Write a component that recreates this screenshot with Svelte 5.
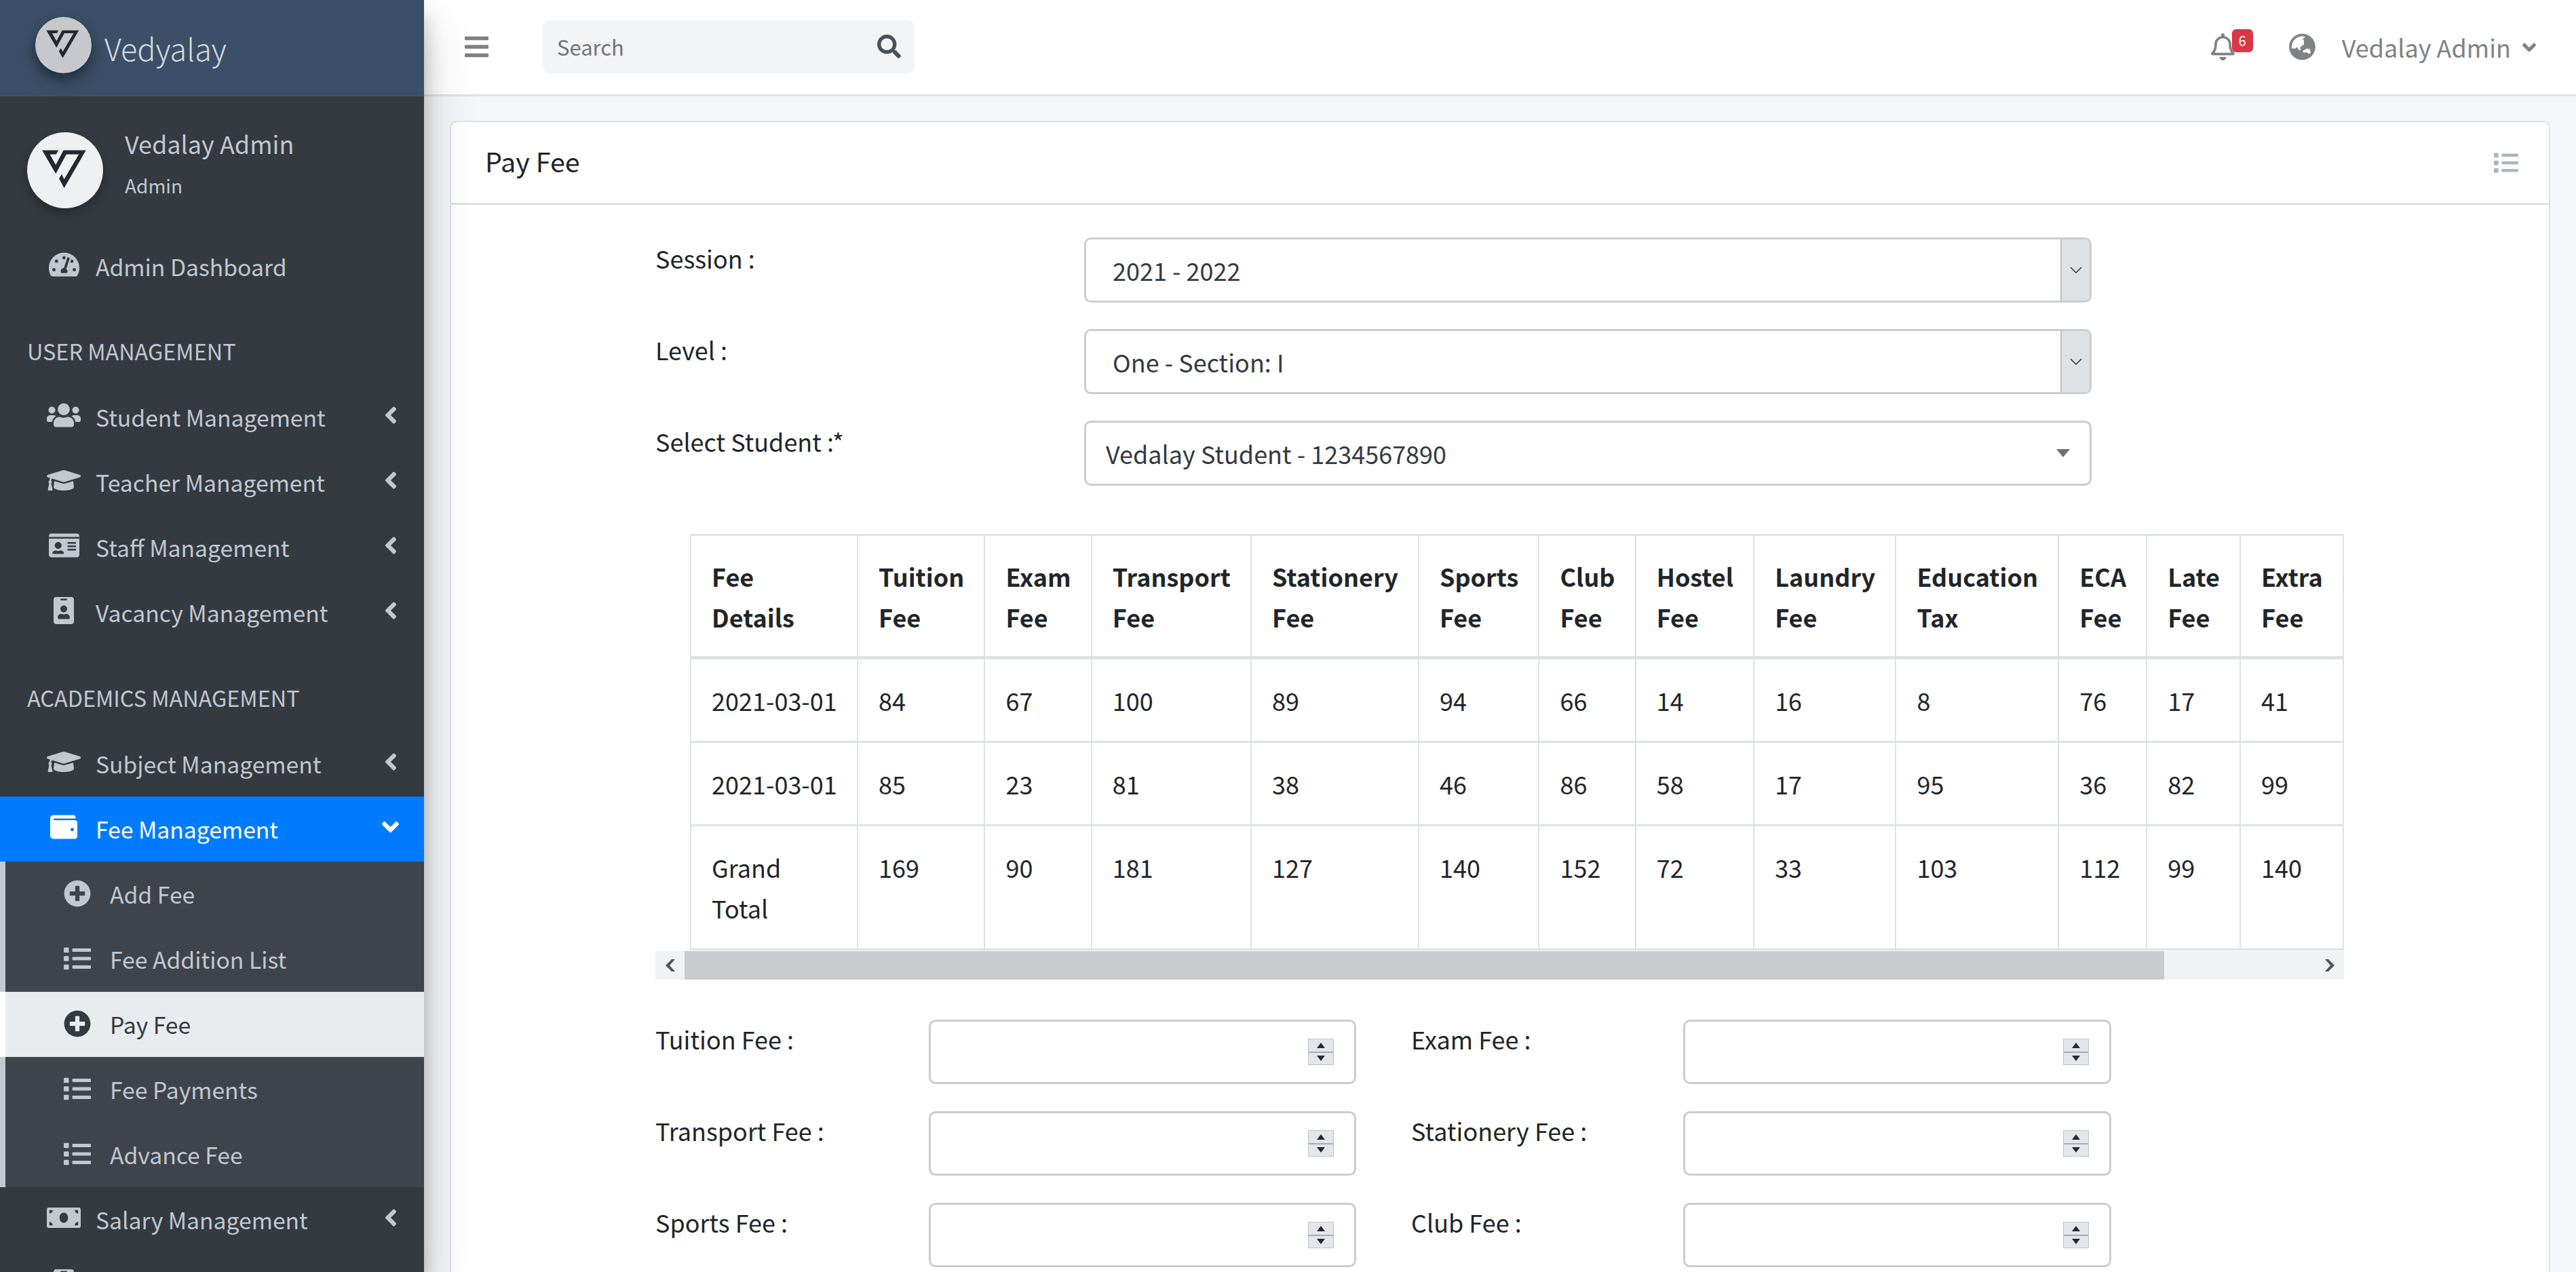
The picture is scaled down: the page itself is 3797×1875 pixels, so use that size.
<script lang="ts">
  const ICONS: Record<string, { w: number; d: string }> = {
    gauge: { w: 576, d: "M288 32C128.94 32 0 160.94 0 320c0 52.8 14.25 102.26 39.06 144.8 5.61 9.62 16.3 15.2 27.44 15.2h443c11.14 0 21.83-5.58 27.44-15.2C561.75 422.26 576 372.8 576 320c0-159.06-128.94-288-288-288zm0 64c14.71 0 26.58 10.13 30.32 23.65-1.11 2.26-2.64 4.23-3.45 6.67l-9.22 27.67c-5.13 3.49-10.97 6.01-17.64 6.01-17.67 0-32-14.33-32-32S270.33 96 288 96zM96 384c-17.67 0-32-14.33-32-32s14.33-32 32-32 32 14.33 32 32-14.33 32-32 32zm48-160c-17.67 0-32-14.33-32-32s14.33-32 32-32 32 14.33 32 32-14.33 32-32 32zm246.77-72.41l-61.33 184C343.13 347.33 352 364.54 352 384c0 11.72-3.38 22.55-8.88 32H232.88c-5.5-9.45-8.88-20.28-8.88-32 0-33.94 26.5-61.43 59.9-63.59l61.34-184.01c4.17-12.56 17.73-19.45 30.36-15.17 12.57 4.19 19.35 17.79 15.17 30.36zm14.66 57.2l15.52-46.55c3.47-1.29 7.13-2.23 11.05-2.23 17.67 0 32 14.33 32 32s-14.33 32-32 32c-11.38-.01-20.89-6.28-26.57-15.22zM480 384c-17.67 0-32-14.33-32-32s14.33-32 32-32 32 14.33 32 32-14.33 32-32 32z" },
    users: { w: 640, d: "M96 224c35.3 0 64-28.7 64-64s-28.7-64-64-64-64 28.7-64 64 28.7 64 64 64zm448 0c35.3 0 64-28.7 64-64s-28.7-64-64-64-64 28.7-64 64 28.7 64 64 64zm32 32h-64c-17.6 0-33.5 7.1-45.1 18.6 40.3 22.1 68.9 62 75.1 109.4h66c17.7 0 32-14.3 32-32v-32c0-35.3-28.7-64-64-64zm-256 0c61.9 0 112-50.1 112-112S381.9 32 320 32 208 82.1 208 144s50.1 112 112 112zm76.8 32h-8.3c-20.8 10-43.9 16-68.5 16s-47.6-6-68.5-16h-8.3C179.6 288 128 339.6 128 403.2V432c0 26.5 21.5 48 48 48h288c26.5 0 48-21.5 48-48v-28.8c0-63.6-51.6-115.2-115.2-115.2zm-223.7-13.4C161.5 263.1 145.6 256 128 256H64c-35.3 0-64 28.7-64 64v32c0 17.7 14.3 32 32 32h65.9c6.3-47.4 34.9-87.3 75.2-109.4z" },
    cap: { w: 640, d: "M622.34 153.2L343.4 67.5c-15.2-4.67-31.6-4.67-46.79 0L17.66 153.2c-23.54 7.23-23.54 38.36 0 45.59l48.63 14.94c-10.67 13.19-17.23 29.28-17.88 46.9C38.78 266.15 32 276.11 32 288c0 10.78 5.68 19.85 13.86 25.65L20.33 428.53C18.11 438.52 25.71 448 35.94 448h56.11c10.24 0 17.84-9.48 15.62-19.47L82.14 313.65C90.32 307.85 96 298.78 96 288c0-11.57-6.47-21.25-15.66-26.87.76-15.02 8.44-28.3 20.69-36.72L296.6 284.5c9.06 2.78 26.44 6.25 46.79 0l278.95-85.7c23.55-7.24 23.55-38.36 0-45.6zM352.79 315.09c-28.53 8.76-52.84 3.92-65.59 0l-145.02-44.55L128 384c0 35.35 85.96 64 192 64s192-28.65 192-64l-14.18-113.47-145.03 44.56z" },
    card: { w: 576, d: "M528 32H48C21.5 32 0 53.5 0 80v16h576V80c0-26.5-21.5-48-48-48zM0 432c0 26.5 21.5 48 48 48h480c26.5 0 48-21.5 48-48V128H0v304zm352-232c0-4.4 3.6-8 8-8h144c4.4 0 8 3.6 8 8v16c0 4.4-3.6 8-8 8H360c-4.4 0-8-3.6-8-8v-16zm0 64c0-4.4 3.6-8 8-8h144c4.4 0 8 3.6 8 8v16c0 4.4-3.6 8-8 8H360c-4.4 0-8-3.6-8-8v-16zm0 64c0-4.4 3.6-8 8-8h144c4.4 0 8 3.6 8 8v16c0 4.4-3.6 8-8 8H360c-4.4 0-8-3.6-8-8v-16zM176 192c35.3 0 64 28.7 64 64s-28.7 64-64 64-64-28.7-64-64 28.7-64 64-64zM67.1 396.2C75.5 370.5 99.6 352 128 352h8.2c12.3 5.1 25.7 8 39.8 8s27.6-2.9 39.8-8h8.2c28.4 0 52.5 18.5 60.9 44.2 3.2 9.9-5.2 19.8-15.6 19.8H82.7c-10.4 0-18.8-10-15.6-19.8z" },
    badge: { w: 384, d: "M336 0H48C21.5 0 0 21.5 0 48v416c0 26.5 21.5 48 48 48h288c26.5 0 48-21.5 48-48V48c0-26.5-21.5-48-48-48zM144 32h96c8.8 0 16 7.2 16 16s-7.2 16-16 16h-96c-8.8 0-16-7.2-16-16s7.2-16 16-16zm48 128c35.3 0 64 28.7 64 64s-28.7 64-64 64-64-28.7-64-64 28.7-64 64-64zm112 236.8c0 10.6-10 19.2-22.4 19.2H102.4C90 416 80 407.4 80 396.8v-19.2c0-31.8 30.1-57.6 67.2-57.6h5c12.3 5.1 25.7 8 39.8 8s27.6-2.9 39.8-8h5c37.1 0 67.2 25.8 67.2 57.6v19.2z" },
    wallet: { w: 512, d: "M461.2 128H80c-8.84 0-16-7.16-16-16s7.16-16 16-16h384c8.84 0 16-7.16 16-16 0-26.51-21.49-48-48-48H64C28.65 32 0 60.65 0 96v320c0 35.35 28.65 64 64 64h397.2c28.02 0 50.8-21.53 50.8-48V176c0-26.47-22.78-48-50.8-48zM416 336c-17.67 0-32-14.33-32-32s14.33-32 32-32 32 14.33 32 32-14.33 32-32 32z" },
    money: { w: 640, d: "M608 64H32C14.33 64 0 78.33 0 96v320c0 17.67 14.33 32 32 32h576c17.67 0 32-14.33 32-32V96c0-17.67-14.33-32-32-32zM48 400v-64c35.35 0 64 28.65 64 64H48zm0-224v-64h64c0 35.35-28.65 64-64 64zm272 176c-44.19 0-80-42.99-80-96 0-53.02 35.82-96 80-96s80 42.98 80 96c0 53.03-35.83 96-80 96zm272 48h-64c0-35.35 28.65-64 64-64v64zm0-224c-35.35 0-64-28.65-64-64h64v64z" },
    plus: { w: 512, d: "M256 8C119 8 8 119 8 256s111 248 248 248 248-111 248-248S393 8 256 8zm144 276c0 6.6-5.4 12-12 12h-92v92c0 6.6-5.4 12-12 12h-56c-6.6 0-12-5.4-12-12v-92h-92c-6.6 0-12-5.4-12-12v-56c0-6.6 5.4-12 12-12h92v-92c0-6.6 5.4-12 12-12h56c6.6 0 12 5.4 12 12v92h92c6.6 0 12 5.4 12 12v56z" },
    list: { w: 512, d: "M80 368H16a16 16 0 0 0-16 16v64a16 16 0 0 0 16 16h64a16 16 0 0 0 16-16v-64a16 16 0 0 0-16-16zm0-320H16A16 16 0 0 0 0 64v64a16 16 0 0 0 16 16h64a16 16 0 0 0 16-16V64a16 16 0 0 0-16-16zm0 160H16a16 16 0 0 0-16 16v64a16 16 0 0 0 16 16h64a16 16 0 0 0 16-16v-64a16 16 0 0 0-16-16zm416 176H176a16 16 0 0 0-16 16v32a16 16 0 0 0 16 16h320a16 16 0 0 0 16-16v-32a16 16 0 0 0-16-16zm0-320H176a16 16 0 0 0-16 16v32a16 16 0 0 0 16 16h320a16 16 0 0 0 16-16V80a16 16 0 0 0-16-16zm0 160H176a16 16 0 0 0-16 16v32a16 16 0 0 0 16 16h320a16 16 0 0 0 16-16v-32a16 16 0 0 0-16-16z" },
    left: { w: 256, d: "M31.7 239l136-136c9.4-9.4 24.6-9.4 33.9 0l22.6 22.6c9.4 9.4 9.4 24.6 0 33.9L127.9 256l96.4 96.4c9.4 9.4 9.4 24.6 0 33.9L201.7 409c-9.4 9.4-24.6 9.4-33.9 0l-136-136c-9.5-9.4-9.5-24.6-.1-34z" },
    down: { w: 320, d: "M143 352.3L7 216.3c-9.4-9.4-9.4-24.6 0-33.9l22.6-22.6c9.4-9.4 24.6-9.4 33.9 0l96.4 96.4 96.4-96.4c9.4-9.4 24.6-9.4 33.9 0l22.6 22.6c9.4 9.4 9.4 24.6 0 33.9l-136 136c-9.2 9.4-24.4 9.4-33.8 0z" },
    bars: { w: 448, d: "M16 132h416c8.837 0 16-7.163 16-16V76c0-8.837-7.163-16-16-16H16C7.163 60 0 67.163 0 76v40c0 8.837 7.163 16 16 16zm0 160h416c8.837 0 16-7.163 16-16v-40c0-8.837-7.163-16-16-16H16c-8.837 0-16 7.163-16 16v40c0 8.837 7.163 16 16 16zm0 160h416c8.837 0 16-7.163 16-16v-40c0-8.837-7.163-16-16-16H16c-8.837 0-16 7.163-16 16v40c0 8.837 7.163 16 16 16z" },
    search: { w: 512, d: "M505 442.7L405.3 343c-4.5-4.5-10.6-7-17-7H372c27.6-35.3 44-79.7 44-128C416 93.1 322.9 0 208 0S0 93.1 0 208s93.1 208 208 208c48.3 0 92.7-16.4 128-44v16.3c0 6.4 2.5 12.5 7 17l99.7 99.7c9.4 9.4 24.6 9.4 33.9 0l28.3-28.3c9.4-9.4 9.4-24.6.1-34zM208 336c-70.7 0-128-57.2-128-128 0-70.7 57.2-128 128-128 70.7 0 128 57.2 128 128 0 70.7-57.2 128-128 128z" },
    bell: { w: 448, d: "M439.39 362.29c-19.32-20.76-55.47-51.99-55.47-154.29 0-77.7-54.48-139.9-127.94-155.16V32c0-17.67-14.32-32-31.98-32s-31.98 14.33-31.98 32v20.84C118.56 68.1 64.08 130.3 64.08 208c0 102.3-36.15 133.53-55.47 154.29-6 6.45-8.66 14.16-8.61 21.71.11 16.4 12.98 32 32.1 32h383.8c19.12 0 32-15.6 32.1-32 .05-7.55-2.61-15.27-8.61-21.71zM67.53 368c21.22-27.97 44.42-74.33 44.53-159.42 0-.2-.06-.38-.06-.58 0-61.86 50.14-112 112-112s112 50.14 112 112c0 .2-.06.38-.06.58.11 85.1 23.31 131.46 44.53 159.42H67.53zM224 512c35.32 0 63.97-28.65 63.97-64H160.03c0 35.35 28.65 64 63.97 64z" },
    globe: { w: 496, d: "M248 8C111.03 8 0 119.03 0 256s111.03 248 248 248 248-111.03 248-248S384.97 8 248 8zm-11.34 240.23c-2.89 4.82-8.1 7.77-13.72 7.77h-.31c-4.24 0-8.31 1.69-11.31 4.69l-5.66 5.66c-3.12 3.12-3.12 8.19 0 11.31l5.66 5.66c3 3 4.69 7.07 4.69 11.31V304c0 8.84-7.16 16-16 16h-6.11c-6.06 0-11.6-3.42-14.31-8.85l-22.62-45.23c-2.44-4.88-8.95-5.94-12.81-2.08l-19.47 19.46c-3 3-7.07 4.69-11.31 4.69H50.81C49.12 277.55 48 266.92 48 256c0-110.28 89.72-200 200-200 21.51 0 42.2 3.51 61.63 9.82l-50.16 38.53c-5.11 3.41-4.63 11.06.86 13.81l10.83 5.41c5.42 2.71 8.84 8.25 8.84 14.31V216c0 4.42-3.58 8-8 8h-3.06c-3.03 0-5.8-1.71-7.15-4.42-1.56-3.12-5.96-3.29-7.76-.3l-17.37 28.95zM408 358.43c0 4.24-1.69 8.31-4.69 11.31l-9.57 9.57c-3 3-7.07 4.69-11.31 4.69h-15.16c-4.24 0-8.31-1.69-11.31-4.69l-13.01-13.01a26.767 26.767 0 0 0-25.42-7.04l-21.27 5.32c-1.27.32-2.57.47-3.88.47h-10.34c-4.24 0-8.31-1.69-11.31-4.69l-11.91-11.91a8.008 8.008 0 0 1-2.34-5.66v-10.2c0-3.27 1.99-6.21 5.03-7.43l39.34-15.74c1.98-.79 3.86-1.82 5.59-3.05l23.71-16.89a7.978 7.978 0 0 1 4.64-1.48h12.09c3.23 0 6.15 1.94 7.39 4.93l5.35 12.85a4 4 0 0 0 3.69 2.46h3.8c1.78 0 3.35-1.18 3.84-2.88l4.2-14.47c.5-1.71 2.06-2.88 3.84-2.88h6.06c2.21 0 4 1.79 4 4v12.93c0 2.12.84 4.16 2.34 5.66l2.34 2.34c1.5 1.5 2.34 3.54 2.34 5.66v15.56z" },
  };

  const LOGO = "68,82 142,82 132,100 103,100 130,148 165,82 267,82 168,253 145,210 157,190 168,213 235,100 178,100 130,188";

  const userNav = [
    { icon: "users", label: "Student Management" },
    { icon: "cap", label: "Teacher Management" },
    { icon: "card", label: "Staff Management" },
    { icon: "badge", label: "Vacancy Management" },
  ];

  const feeNav = [
    { icon: "plus", label: "Add Fee" },
    { icon: "list", label: "Fee Addition List" },
    { icon: "plus", label: "Pay Fee", current: true },
    { icon: "list", label: "Fee Payments" },
    { icon: "list", label: "Advance Fee" },
  ];

  const heads = [
    ["Fee", "Details"],
    ["Tuition", "Fee"],
    ["Exam", "Fee"],
    ["Transport", "Fee"],
    ["Stationery", "Fee"],
    ["Sports", "Fee"],
    ["Club", "Fee"],
    ["Hostel", "Fee"],
    ["Laundry", "Fee"],
    ["Education", "Tax"],
    ["ECA", "Fee"],
    ["Late", "Fee"],
    ["Extra", "Fee"],
  ];

  const rows = [
    ["2021-03-01", 84, 67, 100, 89, 94, 66, 14, 16, 8, 76, 17, 41],
    ["2021-03-01", 85, 23, 81, 38, 46, 86, 58, 17, 95, 36, 82, 99],
    ["Grand Total", 169, 90, 181, 127, 140, 152, 72, 33, 103, 112, 99, 140],
  ];

  const feeFields = [
    "Tuition Fee :",
    "Exam Fee :",
    "Transport Fee :",
    "Stationery Fee :",
    "Sports Fee :",
    "Club Fee :",
  ];
</script>

{#snippet icon(name: string, cls: string)}
  <svg class={cls} viewBox="0 0 {ICONS[name].w} 512" fill="currentColor"><path d={ICONS[name].d} /></svg>
{/snippet}

{#snippet logo()}
  <svg class="logo-mark" viewBox="0 0 345 345"><polygon points={LOGO} fill="#23272e" /></svg>
{/snippet}

{#snippet navRow(item: { icon: string; label: string })}
  <li class="nav-item">
    <span class="nav-icon">{@render icon(item.icon, "ico")}</span>
    <span class="nav-text">{item.label}</span>
    {@render icon("left", "caret")}
  </li>
{/snippet}

<div class="wrapper">
  <aside class="sidebar">
    <div class="brand">
      <span class="brand-img">{@render logo()}</span>
      <span class="brand-text">Vedyalay</span>
    </div>
    <div class="user-panel">
      <span class="avatar">{@render logo()}</span>
      <div class="user-info">
        <div class="user-name">Vedalay Admin</div>
        <div class="user-role">Admin</div>
      </div>
    </div>
    <ul class="nav">
      <li class="nav-item">
        <span class="nav-icon">{@render icon("gauge", "ico")}</span>
        <span class="nav-text">Admin Dashboard</span>
      </li>
      <li class="nav-header">USER MANAGEMENT</li>
      {#each userNav as item}
        {@render navRow(item)}
      {/each}
      <li class="nav-header second">ACADEMICS MANAGEMENT</li>
      {@render navRow({ icon: "cap", label: "Subject Management" })}
      <li class="nav-item active">
        <span class="nav-icon">{@render icon("wallet", "ico wallet")}</span>
        <span class="nav-text">Fee Management</span>
        {@render icon("down", "caret down")}
      </li>
      <ul class="subnav">
        {#each feeNav as item}
          <li class="sub-item" class:current={item.current}>
            {@render icon(item.icon, "sub-ico")}
            <span class="nav-text">{item.label}</span>
          </li>
        {/each}
      </ul>
      {@render navRow({ icon: "money", label: "Salary Management" })}
      <li class="nav-item">
        <span class="nav-icon">{@render icon("badge", "ico")}</span>
      </li>
    </ul>
  </aside>

  <div class="main">
    <nav class="navbar">
      {@render icon("bars", "bars")}
      <div class="search">
        <input class="search-input" type="text" placeholder="Search" />
        {@render icon("search", "search-ico")}
      </div>
      <div class="nav-right">
        <span class="bell">
          {@render icon("bell", "bell-ico")}
          <span class="badge">6</span>
        </span>
        {@render icon("globe", "globe-ico")}
        <span class="nav-user">Vedalay Admin</span>
        {@render icon("down", "user-caret")}
      </div>
    </nav>

    <section class="content">
      <div class="card">
        <header class="card-header">
          <h3 class="card-title">Pay Fee</h3>
          {@render icon("list", "tool-ico")}
        </header>
        <div class="card-body">
          <div class="form-block">
            <div class="form-row">
              <label class="lbl" for="session">Session :</label>
              <div class="select-wrap">
                <select id="session" class="select"><option>2021 - 2022</option></select>
                <span class="select-btn"><svg viewBox="0 0 18 10" class="chev"><path d="M1 1l8 8 8-8" fill="none" stroke="#343a40" stroke-width="1.6" /></svg></span>
              </div>
            </div>
            <div class="form-row">
              <label class="lbl" for="level">Level :</label>
              <div class="select-wrap">
                <select id="level" class="select"><option>One - Section: I</option></select>
                <span class="select-btn"><svg viewBox="0 0 18 10" class="chev"><path d="M1 1l8 8 8-8" fill="none" stroke="#343a40" stroke-width="1.6" /></svg></span>
              </div>
            </div>
            <div class="form-row">
              <span class="lbl">Select Student :*</span>
              <div class="select2">
                <span>Vedalay Student - 1234567890</span>
                <span class="tri"></span>
              </div>
            </div>
          </div>

          <div class="table-scroll">
            <div class="table-clip">
              <table class="fee-table">
                <thead>
                  <tr>
                    {#each heads as h}
                      <th>{h[0]} {h[1]}</th>
                    {/each}
                  </tr>
                </thead>
                <tbody>
                  {#each rows as row}
                    <tr>
                      {#each row as cell}
                        <td>{cell}</td>
                      {/each}
                    </tr>
                  {/each}
                </tbody>
              </table>
            </div>
            <div class="scrollbar">
              <span class="sb-btn"><svg viewBox="0 0 16 18" class="sb-arrow"><path d="M15 0h-5L1 9l9 9h5L7 9z" fill="#50555b" /></svg></span>
              <span class="sb-track"><span class="sb-thumb"></span></span>
              <span class="sb-btn"><svg viewBox="0 0 16 18" class="sb-arrow"><path d="M1 0h5l9 9-9 9H1l8-9z" fill="#50555b" /></svg></span>
            </div>
          </div>

          <div class="fee-grid">
            {#each feeFields as field, i}
              <span class="lbl" class:gap-left={i % 2 === 1}>{field}</span>
              <div class="num-input">
                <input type="text" class="num-field" aria-label={field} />
                <span class="spin">
                  <span class="spin-part"><i class="up"></i></span>
                  <span class="spin-part"><i class="dn"></i></span>
                </span>
              </div>
            {/each}
          </div>
        </div>
      </div>
    </section>
  </div>
</div>

<style>
  :global(body) {
    margin: 0;
    overflow: hidden;
    background: #f4f6f9;
  }

  .wrapper {
    display: flex;
    width: 3797px;
    height: 1875px;
    overflow: hidden;
    font-family: "Noto Sans CJK JP", "Source Sans Pro", "Open Sans", sans-serif;
    font-size: 36px;
    line-height: 60px;
    color: #212529;
  }

  /* sidebar */
  .sidebar {
    position: relative;
    z-index: 2;
    flex: 0 0 625px;
    height: 1875px;
    overflow: hidden;
    background: #343a40;
    color: #c2c7d0;
    box-shadow: 0 35px 70px rgba(0, 0, 0, 0.19), 0 25px 25px rgba(0, 0, 0, 0.22);
  }

  .brand {
    display: flex;
    align-items: center;
    height: 142px;
    padding-left: 52px;
    box-sizing: border-box;
    background: #3b5068;
    border-bottom: 1px solid #4b545c;
  }

  .brand-img {
    display: block;
    width: 83px;
    height: 83px;
    margin-top: -9px;
    border-radius: 50%;
    background: #c6c8cc;
    box-shadow: 0 7px 15px rgba(0, 0, 0, 0.3), 0 15px 30px rgba(0, 0, 0, 0.22);
  }

  .brand-text {
    margin-left: 19px;
    font-size: 45px;
    font-weight: 300;
    color: rgba(255, 255, 255, 0.8);
  }

  .logo-mark {
    display: block;
    width: 100%;
    height: 100%;
  }

  .user-panel {
    display: flex;
    height: 203px;
    padding: 53px 0 0 40px;
    box-sizing: border-box;
  }

  .avatar {
    display: block;
    width: 112px;
    height: 112px;
    border-radius: 50%;
    background: #eef0f2;
    box-shadow: 0 7px 15px rgba(0, 0, 0, 0.3);
  }

  .user-info {
    margin-left: 32px;
  }

  .user-name {
    margin-top: -14px;
    line-height: 60px;
  }

  .user-role {
    margin-top: 2px;
    font-size: 28px;
    line-height: 60px;
  }

  .nav,
  .subnav {
    list-style: none;
    margin: 0;
    padding: 0;
  }

  .nav-item {
    display: flex;
    align-items: center;
    height: 96px;
    padding-left: 69px;
    padding-right: 39px;
    box-sizing: border-box;
    font-size: 33.7px;
  }

  .nav-icon {
    display: flex;
    justify-content: center;
    flex: 0 0 50px;
    margin-top: -6px;
  }

  .nav-icon :global(.ico) {
    height: 40px;
  }

  .nav-icon :global(.wallet) {
    width: 40px;
  }

  .nav-text {
    margin-left: 22px;
    flex: 1;
  }

  .nav-item :global(.caret) {
    height: 40px;
    width: 20px;
    margin-top: -6px;
  }

  .nav-item :global(.caret.down) {
    width: 25px;
    margin-right: -2px;
  }

  .nav-header {
    height: 126px;
    padding: 49px 0 0 40px;
    box-sizing: border-box;
    font-size: 32.4px;
    line-height: 54px;
  }

  .nav-header.second {
    height: 127px;
    padding-top: 50px;
  }

  .active {
    background: #007bff;
    color: #fff;
    box-shadow: 0 2.5px 7.5px rgba(0, 0, 0, 0.12), 0 2.5px 5px rgba(0, 0, 0, 0.24);
  }

  .subnav {
    background: #3f444c;
    border-left: 8px solid #c2c7d0;
  }

  .sub-item {
    display: flex;
    align-items: center;
    height: 96px;
    padding-left: 86px;
    box-sizing: border-box;
    font-size: 33.7px;
  }

  .sub-item :global(.sub-ico) {
    width: 40px;
    height: 40px;
    margin-top: -2px;
  }

  .sub-item .nav-text {
    margin-left: 28px;
  }

  .current {
    background: #e9ecef;
    color: #343a40;
    box-shadow: -8px 0 0 #fff;
  }

  /* top bar */
  .main {
    flex: 1;
    min-width: 0;
    display: flex;
    flex-direction: column;
  }

  .navbar {
    display: flex;
    align-items: center;
    height: 142px;
    flex: none;
    box-sizing: border-box;
    padding: 0 59px 2px 60px;
    background: #fff;
    border-bottom: 3px solid #dee2e6;
  }

  .navbar :global(.bars) {
    width: 35px;
    height: 40px;
    color: #7f8083;
  }

  .search {
    display: flex;
    align-items: center;
    width: 548px;
    height: 78px;
    margin-left: 80px;
    border-radius: 10px;
    background: #f2f4f6;
  }

  .search-input {
    flex: 1;
    min-width: 0;
    height: 100%;
    padding: 0 0 0 21px;
    border: 0;
    outline: 0;
    background: transparent;
    font: inherit;
    font-size: 31px;
  }

  .search-input::placeholder {
    color: #6c757d;
    opacity: 1;
  }

  .search :global(.search-ico) {
    width: 35px;
    height: 35px;
    margin-right: 20px;
    color: #495057;
  }

  .nav-right {
    display: flex;
    align-items: center;
    margin-left: auto;
    color: #808285;
  }

  .bell {
    position: relative;
    display: block;
    height: 40px;
  }

  .bell :global(.bell-ico) {
    display: block;
    width: 35px;
    height: 40px;
  }

  .badge {
    position: absolute;
    top: -6px;
    left: 31px;
    width: 31px;
    height: 34px;
    border-radius: 6px;
    background: #dc3545;
    color: #fff;
    font-size: 20px;
    line-height: 34px;
    text-align: center;
  }

  .nav-right :global(.globe-ico) {
    width: 39px;
    height: 40px;
    margin-left: 80px;
  }

  .nav-user {
    margin-left: 39px;
  }

  .nav-right :global(.user-caret) {
    width: 20px;
    height: 32px;
    margin-left: 17px;
    margin-top: 2px;
  }

  /* content */
  .content {
    flex: 1;
    padding: 36px 38px 0 38px;
    min-height: 0;
  }

  .card {
    background: #fff;
    border: 2px solid #dfe2e6;
    border-bottom: 0;
    border-radius: 10px 10px 0 0;
  }

  .card-header {
    display: flex;
    align-items: center;
    justify-content: space-between;
    height: 122px;
    padding: 0 45px 0 50px;
    box-sizing: border-box;
    border-bottom: 3px solid #dee2e6;
  }

  .card-title {
    margin: -5px 0 0;
    font-size: 39.5px;
    font-weight: 400;
    line-height: 60px;
  }

  .card-header :global(.tool-ico) {
    width: 36px;
    height: 36px;
    color: #adb5bd;
  }

  .card-body {
    padding: 48px 0 40px 301px;
  }

  .form-row {
    display: flex;
    height: 96px;
    margin-bottom: 39px;
  }

  .lbl {
    display: block;
    line-height: 60px;
  }

  .form-row .lbl {
    flex: 0 0 632px;
  }

  .select-wrap,
  .select2 {
    position: relative;
    display: flex;
    width: 1485px;
    height: 96px;
    box-sizing: border-box;
    border: 3px solid #c9ccd0;
    border-radius: 10px;
    overflow: hidden;
  }

  .select {
    appearance: none;
    flex: 1;
    min-width: 0;
    padding: 0 0 0 39px;
    border: 0;
    outline: 0;
    background: #fff;
    color: #343a40;
    font: inherit;
  }

  .select-btn {
    display: flex;
    align-items: center;
    justify-content: center;
    flex: 0 0 41px;
    border-left: 2px solid #bcbfc3;
    background: #dfe2e5;
  }

  .chev {
    width: 18px;
    height: 10px;
  }

  .select2 {
    align-items: center;
    justify-content: space-between;
    padding: 0 29px;
    color: #343a40;
    line-height: 90px;
  }

  .tri {
    width: 0;
    height: 0;
    border-left: 10px solid transparent;
    border-right: 10px solid transparent;
    border-top: 12px solid #6d7278;
  }

  .table-scroll {
    width: 2489px;
    margin-top: 71px;
  }

  .table-clip {
    overflow: hidden;
    padding-left: 51px;
  }

  .fee-table {
    border-collapse: collapse;
    width: 100%;
  }

  .fee-table th,
  .fee-table td {
    padding: 30px 29px 30px 30px;
    border: solid #dee2e6;
    border-width: 3px 2px;
    vertical-align: top;
    text-align: left;
  }

  .fee-table th {
    padding: 29px 29px 28px 30px;
    border-bottom-width: 5px;
    font-weight: 700;
  }

  /* keeps the date on one line while "Grand Total" still wraps */
  .fee-table td:first-child {
    min-width: 186px;
    padding-right: 28px;
  }

  .scrollbar {
    display: flex;
    height: 42px;
    margin-top: 1px;
    background: #f1f2f4;
  }

  .sb-btn {
    display: flex;
    align-items: center;
    justify-content: center;
    flex: 0 0 43px;
  }

  .sb-arrow {
    width: 16px;
    height: 18px;
  }

  .sb-track {
    flex: 1;
    display: block;
  }

  .sb-thumb {
    display: block;
    width: 2181px;
    height: 100%;
    background: #c9cbcf;
  }

  .fee-grid {
    display: grid;
    grid-template-columns: 403px 630px 81px 401px 631px;
    row-gap: 40px;
    margin-top: 59px;
  }

  .fee-grid .lbl {
    margin-top: -2px;
  }

  .gap-left {
    grid-column: 3 / 5;
    padding-left: 81px;
  }

  .num-input {
    display: flex;
    align-items: center;
    height: 95px;
    box-sizing: border-box;
    border: 3px solid #c9ccd0;
    border-radius: 10px;
    padding-right: 30px;
  }

  .num-field {
    flex: 1;
    min-width: 0;
    height: 100%;
    padding: 0;
    border: 0;
    outline: 0;
    background: transparent;
  }

  .spin {
    display: flex;
    flex-direction: column;
    width: 38px;
    height: 39px;
    flex: none;
    box-sizing: border-box;
    border: 1px solid #bfc3c7;
    background: #e4e7ea;
  }

  .spin-part {
    flex: 1;
    display: flex;
    align-items: center;
    justify-content: center;
  }

  .spin-part + .spin-part {
    border-top: 2px solid #a8abaf;
  }

  .up,
  .dn {
    width: 0;
    height: 0;
    border-left: 6px solid transparent;
    border-right: 6px solid transparent;
  }

  .up {
    border-bottom: 8px solid #26292e;
  }

  .dn {
    border-top: 8px solid #26292e;
  }
</style>
